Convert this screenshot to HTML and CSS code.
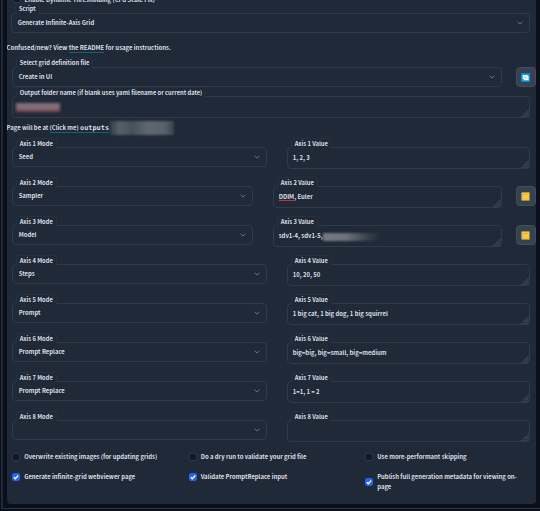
FILE: index.html
```
<!DOCTYPE html>
<html lang="en">
<head>
<meta charset="utf-8">
<title>Generate Infinite-Axis Grid</title>
<link rel="stylesheet" href="styles.css">
</head>
<body>
<svg class="defs" aria-hidden="true">
  <symbol id="chev" viewBox="0 0 6 4"><path d="M.6.7 3 3.1 5.4.7" fill="none" stroke="currentColor" stroke-width="1"/></symbol>
  <symbol id="grip" viewBox="0 0 8 8"><path d="M.5 7.8 7.8.5M2.5 7.8 7.8 2.5M4.5 7.8 7.8 4.5M6.5 7.8 7.8 6.5" stroke="currentColor" stroke-width=".8" stroke-dasharray=".9 .5"/></symbol>
  <symbol id="tick" viewBox="0 0 8 8"><path d="M1.8 4.2 3.3 5.7 6.3 2.5" fill="none" stroke="#fff" stroke-width="1.3"/></symbol>
  <symbol id="note" viewBox="0 0 9 9"><path fill="#fdcb35" d="M.7.4h7.8v8H.7z"/><path fill="#c49a3a" d="M1 7.8h7.5v.8H1z"/><path fill="#a9b0a0" d="M.4.8h1.2v7.4H.4z"/><path stroke="#d79b28" stroke-width=".6" d="M2.2 2.5h4.5"/></symbol>
  <symbol id="refresh" viewBox="0 0 9 9"><path fill="#0d9bf0" d="M.2.3h8.6v8.4H.2z"/><path fill="#f2faff" d="M1.7 2h4.9v.9h1v4.3H2.8V6.1H1.7z"/><path fill="none" stroke="#0d9bf0" stroke-width=".35" d="M2.7 4.6 4 3.6l1 .8 1.3-.9M3.7 5.9l1.1-.8 1 .8"/></symbol>
</svg>
<div class="frame">
<main class="panel">
  <div class="cutoff"><i class="check"></i><span>Enable Dynamic Thresholding (CFG Scale Fix)</span></div>
  <div class="field script"><label>Script</label><div class="box select">Generate Infinite-Axis Grid<svg class="chev"><use href="#chev"/></svg></div></div>
  <p class="intro">Confused/new? View <a>the README</a> for usage instructions.</p>
  <div class="row def">
    <div class="field"><label>Select grid definition file</label><div class="box select">Create in UI<svg class="chev"><use href="#chev"/></svg></div></div>
    <button><svg><use href="#refresh"/></svg></button>
  </div>
  <div class="field output"><label>Output folder name (if blank uses yaml filename or current date)</label><div class="box area"><span class="smudge red"></span><svg class="grip"><use href="#grip"/></svg></div></div>
  <p class="page"><span>Page will be at <a>(Click me) <code>outputs</code></a></span><span class="smudge path"></span></p>

  <section class="axes">
    <div class="row"><div class="field"><label>Axis 1 Mode</label><div class="box select">Seed<svg class="chev"><use href="#chev"/></svg></div></div><div class="field"><label>Axis 1 Value</label><div class="box area">1, 2, 3<svg class="grip"><use href="#grip"/></svg></div></div></div>
    <div class="row tool"><div class="field"><label>Axis 2 Mode</label><div class="box select">Sampler<svg class="chev"><use href="#chev"/></svg></div></div><div class="field"><label>Axis 2 Value</label><div class="box area"><span class="misspelt">DDIM</span>, Euler<svg class="grip"><use href="#grip"/></svg></div></div><button><svg><use href="#note"/></svg></button></div>
    <div class="row tool"><div class="field"><label>Axis 3 Mode</label><div class="box select">Model<svg class="chev"><use href="#chev"/></svg></div></div><div class="field"><label>Axis 3 Value</label><div class="box area">sdv1-4, sdv1-5,<span class="smudge models"></span><svg class="grip"><use href="#grip"/></svg></div></div><button><svg><use href="#note"/></svg></button></div>
    <div class="row"><div class="field"><label>Axis 4 Mode</label><div class="box select">Steps<svg class="chev"><use href="#chev"/></svg></div></div><div class="field"><label>Axis 4 Value</label><div class="box area">10, 20, 50<svg class="grip"><use href="#grip"/></svg></div></div></div>
    <div class="row"><div class="field"><label>Axis 5 Mode</label><div class="box select">Prompt<svg class="chev"><use href="#chev"/></svg></div></div><div class="field"><label>Axis 5 Value</label><div class="box area">1 big cat, 1 big dog, 1 big squirrel<svg class="grip"><use href="#grip"/></svg></div></div></div>
    <div class="row"><div class="field"><label>Axis 6 Mode</label><div class="box select">Prompt Replace<svg class="chev"><use href="#chev"/></svg></div></div><div class="field"><label>Axis 6 Value</label><div class="box area">big=big, big=small, big=medium<svg class="grip"><use href="#grip"/></svg></div></div></div>
    <div class="row"><div class="field"><label>Axis 7 Mode</label><div class="box select">Prompt Replace<svg class="chev"><use href="#chev"/></svg></div></div><div class="field"><label>Axis 7 Value</label><div class="box area">1=1, 1 = 2<svg class="grip"><use href="#grip"/></svg></div></div></div>
    <div class="row"><div class="field"><label>Axis 8 Mode</label><div class="box select"><svg class="chev"><use href="#chev"/></svg></div></div><div class="field"><label>Axis 8 Value</label><div class="box area"><svg class="grip"><use href="#grip"/></svg></div></div></div>
  </section>

  <section class="options">
    <div class="opt"><i class="check"></i><span>Overwrite existing images (for updating grids)</span></div>
    <div class="opt"><i class="check"></i><span>Do a dry run to validate your grid file</span></div>
    <div class="opt"><i class="check"></i><span>Use more-performant skipping</span></div>
    <div class="opt"><i class="check on"><svg><use href="#tick"/></svg></i><span>Generate infinite-grid webviewer page</span></div>
    <div class="opt"><i class="check on"><svg><use href="#tick"/></svg></i><span>Validate PromptReplace input</span></div>
    <div class="opt"><i class="check on"><svg><use href="#tick"/></svg></i><span>Publish full generation metadata for viewing on-page</span></div>
  </section>
</main>
</div>
</body>
</html>
```
FILE: styles.css
```
* { box-sizing: border-box; }
body {
  margin: 0;
  height: 511px;
  overflow: hidden;
  background: #0b0f19;
  color: #dcdfe4;
  font: 700 5.9px/10px "Noto Sans CJK JP", "Noto Sans", sans-serif;
}
.defs { position: absolute; width: 0; height: 0; }
.frame {
  height: 509px;
  margin-left: 1px;
  padding-left: 3.6px;
  border-left: 2px solid #1f2937;
  border-bottom: 1px solid #293445;
}
.panel {
  width: 529.4px;
  height: 504px;
  overflow: hidden;
  background: #1f2937;
  border-radius: 0 0 4px 4px;
}
p { margin: 0; height: 10px; white-space: nowrap; }
a { border-bottom: 1px solid #14666b; }
code { font: 700 6.9px/8px "DejaVu Sans Mono", monospace; }
.cutoff {
  display: flex;
  gap: 4px;
  height: 5px;
  margin: 0 0 0 6px;
  align-items: flex-end;
}
.cutoff span { line-height: 10px; }
.cutoff .check { margin-bottom: 2px; }
.field { min-width: 0; }
.field label {
  display: block;
  position: relative;
  z-index: 1;
  width: max-content;
  height: 11px;
  margin: 0 0 -1px 4px;
  padding: 0 3px 0 2.5px;
  font-size: 5.78px;
  line-height: 10px;
  white-space: nowrap;
  background: #1f2937;
  border: solid #253040;
  border-width: 1px 1px 0;
  border-radius: 3px;
}
.box {
  position: relative;
  display: flex;
  align-items: center;
  padding: 0 6px 0 5.5px;
  border: 1px solid #2f3b4a;
  border-radius: 4px;
  white-space: pre;
}
.select { height: 20px; }
.area { height: 22px; padding-left: 4.5px; font-size: 5.93px; }
.chev { width: 6px; height: 4px; margin-left: auto; color: #6b7585; }
.grip { position: absolute; right: 0; bottom: 0; width: 8px; height: 8px; color: #66707b; }
.script { margin: -2px 6px 0 4.8px; }
.script .select { padding-left: 5.3px; }
.intro { margin: 10px 0 4px; font-size: 5.94px; }
.def { margin: 0 0 0 5.6px; display: grid; grid-template-columns: 489.6px 20px; column-gap: 14px; }
.output { margin: 0 6px 0 5.6px; }
.output label { margin-bottom: -2px; }
.page { margin-top: 5px; display: flex; }
button {
  align-self: end;
  width: 20px;
  height: 20px;
  padding: 0;
  display: grid;
  place-items: center;
  border: 1px solid #424d5e;
  border-radius: 4px;
  background: #374151;
}
button svg { width: 9px; height: 9px; }
.axes { margin: 5px 0 0 5.6px; display: grid; grid-auto-rows: 39px; }
.axes .row { display: grid; grid-template-columns: 255px 243px; column-gap: 20px; align-items: start; }
.axes label { margin-bottom: -2px; }
.axes .tool { grid-template-columns: 241px 229px 20px; column-gap: 20px; }
.tool button { align-self: start; margin: 9px 0 0 -6.4px; }
.misspelt { height: 8px; line-height: 8px; border-bottom: 1px solid #c9303f; }
.smudge { display: block; }
.red {
  width: 44px;
  height: 9px;
  margin-left: -2px;
  background: linear-gradient(#77777d, #8e6b74 55%, #703e4d);
  filter: blur(1.5px);
}
.path {
  width: 64px;
  height: 14px;
  margin: -2px 0 0 1px;
  background: linear-gradient(90deg, #343d49, #56606a 15%, #46505b 35%, #606770 60%, #59616b 85%, #38424f);
  filter: blur(1px);
}
.models {
  width: 58px;
  height: 8px;
  margin-top: 2px;
  background: linear-gradient(90deg, #777b84, #6c717b 40%, #3a4350 75%, transparent);
  filter: blur(1px);
}
.options {
  display: grid;
  grid-template-columns: 156px 156px 156px;
  column-gap: 20.5px;
  row-gap: 10px;
  align-items: start;
  margin: 2px 0 0 5.6px;
}
.opt { display: flex; gap: 4px; align-items: center; }
.check {
  flex: none;
  width: 8px;
  height: 8px;
  display: block;
  border: 1px solid #2c3747;
  border-radius: 2px;
  background: #111827;
}
.on { border-color: #2563eb; background: #2563eb; }
.on svg { display: block; width: 8px; height: 8px; margin: -1px; }
```
